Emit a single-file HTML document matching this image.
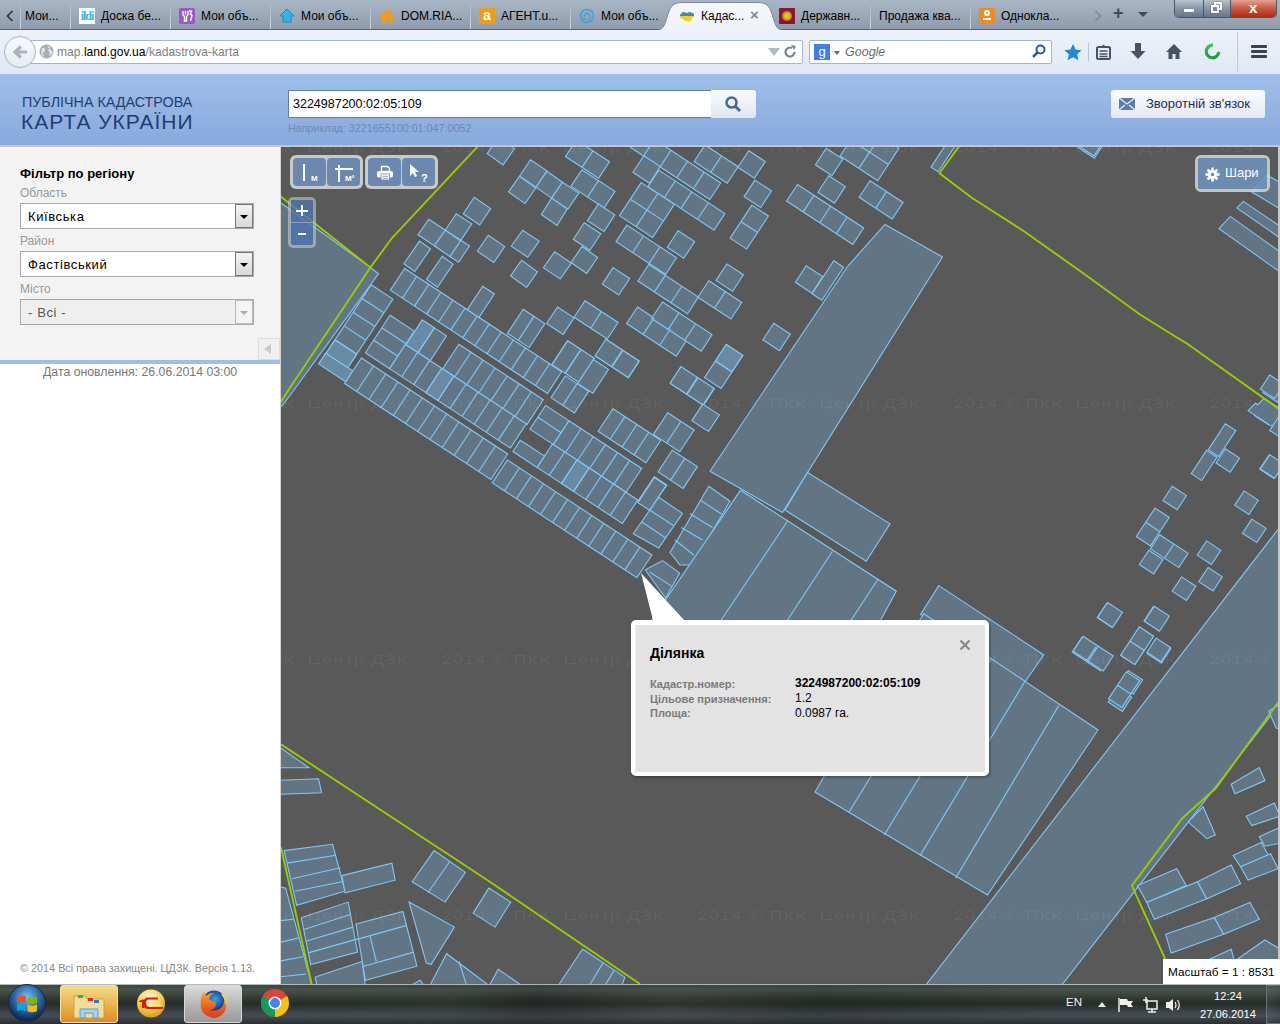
<!DOCTYPE html>
<html><head><meta charset="utf-8">
<style>
*{margin:0;padding:0;box-sizing:border-box}
html,body{width:1280px;height:1024px;overflow:hidden;font-family:"Liberation Sans",sans-serif;background:#fff;position:relative}
.a{position:absolute}
#tabbar{left:0;top:0;width:1280px;height:30px;background:linear-gradient(#a9b6c5,#8e9cad);border-bottom:1px solid #566272}
.tab{position:absolute;top:9px;font-size:12px;color:#000;white-space:nowrap;line-height:14px}
.sep{position:absolute;top:5px;width:1px;height:24px;background:linear-gradient(rgba(210,220,232,0.2),rgba(225,232,240,.8))}
.ico{position:absolute;top:8px;width:16px;height:16px}
#nav{left:0;top:30px;width:1280px;height:44px;background:linear-gradient(#edf2f8,#dfe8f4)}
#header{left:0;top:74px;width:1280px;height:71px;background:linear-gradient(#a0beea,#88a9dd)}
#left{left:0;top:147px;width:280px;height:837px;background:#fff}
#map{left:281px;top:147px;width:999px;height:837px;background:#595959;overflow:hidden}
#taskbar{left:0;top:984px;width:1280px;height:40px;background:linear-gradient(#3a423e 0%,#48524a 15%,#323a34 35%,#262c28 50%,#3e444a 70%,#454b52 80%,#2a2e32 100%)}
.lbl{position:absolute;left:20px;font-size:12px;color:#999}
.sel{position:absolute;left:20px;width:234px;height:26px;background:#fff;border:1px solid #a9a9a9;font-size:13px;letter-spacing:0.6px;color:#000;padding:6px 0 0 7px;line-height:14px}
.sel i{position:absolute;right:0;top:0;width:18px;height:24px;border:1px solid #777;background:linear-gradient(#f4f4f4,#d8d8d8)}
.sel i:after{content:"";position:absolute;left:4px;top:10px;border-left:4px solid transparent;border-right:4px solid transparent;border-top:4px solid #000}
.grp{position:absolute;top:155px;height:34px;border-radius:6px;background:#c9c9c9}
.btn{position:absolute;top:3px;width:33px;height:30px;border-radius:4px;background:#6b88b0}
.wm{position:absolute;font-size:15px;color:rgba(120,120,120,0.35);white-space:nowrap;letter-spacing:0.5px}
.sel i.dis:after{border-top-color:#aaa}
</style></head><body>
<div id="tabbar" class="a">
  <svg class="a" style="left:6px;top:10px" width="8" height="12" viewBox="0 0 8 12"><path d="M6.5 1L1.5 6l5 5" fill="none" stroke="#2a2f36" stroke-width="1.6"/></svg>
  <div class="sep" style="left:20px"></div>
  <div class="tab" style="left:25px">Мои...</div>
  <div class="sep" style="left:70px"></div>
  <div class="ico" style="left:79px;background:#fff;color:#33b5e5;font:bold 12px 'Liberation Serif',serif;line-height:16px;text-align:center;letter-spacing:-1px">ildi</div>
  <div class="tab" style="left:101px">Доска бе...</div>
  <div class="sep" style="left:170px"></div>
  <svg class="ico" style="left:179px" viewBox="0 0 16 16"><rect width="16" height="16" rx="2" fill="#9b59c6"/><path d="M4 3v4l1.5 1.5V13h2V8.5L9 7V3M6.5 3v3.5M10 3h2.5l-1 3 1.5 1.5-1.5 5.5" fill="none" stroke="#fff" stroke-width="1.4"/></svg>
  <div class="tab" style="left:201px">Мои объ...</div>
  <div class="sep" style="left:270px"></div>
  <svg class="ico" style="left:279px" viewBox="0 0 16 16"><path d="M8 1L1 8h3v6h8V8h3z" fill="#3ab0e8" stroke="#1a88c8" stroke-width="1"/></svg>
  <div class="tab" style="left:301px">Мои объ...</div>
  <div class="sep" style="left:370px"></div>
  <svg class="ico" style="left:379px" viewBox="0 0 16 16"><path d="M8 1L0 9h2.5v6h4v-4h3v4h4V9H16z" fill="#f39a1e"/></svg>
  <div class="tab" style="left:401px">DOM.RIA...</div>
  <div class="sep" style="left:470px"></div>
  <div class="ico" style="left:479px;background:#f39c12;color:#fff;font:bold 14px 'Liberation Sans',sans-serif;line-height:14px;text-align:center">a</div>
  <div class="tab" style="left:501px">АГЕНТ.u...</div>
  <div class="sep" style="left:570px"></div>
  <svg class="ico" style="left:579px" viewBox="0 0 16 16"><circle cx="8" cy="8" r="6.5" fill="none" stroke="#3aa4e0" stroke-width="1.6"/><path d="M8 4.5L5 8v3.5h6V8z" fill="none" stroke="#3aa4e0" stroke-width="1.2"/></svg>
  <div class="tab" style="left:601px">Мои объ...</div>
  <svg class="a" style="left:650px;top:0" width="140" height="31" viewBox="0 0 140 31"><defs><linearGradient id="atab" x1="0" y1="0" x2="0" y2="1"><stop offset="0" stop-color="#f6f8fb"/><stop offset="1" stop-color="#edf2f8"/></linearGradient></defs><path d="M5 30.5C14 30.5 15 24 18 14 21 5 24 2.5 33 2.5H107C116 2.5 119 5 122 14 125 24 126 30.5 135 30.5z" fill="url(#atab)" stroke="#7d8898" stroke-width="1"/><rect x="0" y="30" width="140" height="1" fill="#edf2f8"/></svg>
  <svg class="ico" style="left:679px;top:9px" viewBox="0 0 16 16"><path d="M1 6l3-3 4 1 3-1 4 2 0 3-2 1-1 3-2 1-1 -1-3 0-2-2-3-1z" fill="#f5d21a"/><path d="M1 6l3-3 4 1 3-1 4 2 0 2H1z" fill="#3a86d0"/></svg>
  <div class="tab" style="left:701px">Кадас...</div>
  <div class="a" style="left:750px;top:7px;font:bold 15px 'Liberation Sans',sans-serif;color:#888;line-height:16px">&#215;</div>
  <div class="ico" style="left:779px;background:#8a1538;border-radius:1px"><div style="position:absolute;left:3px;top:3px;width:10px;height:10px;border-radius:50%;background:#e8c020;border:2px solid #c89010"></div></div>
  <div class="tab" style="left:801px">Державн...</div>
  <div class="sep" style="left:870px"></div>
  <div class="tab" style="left:879px">Продажа ква...</div>
  <div class="sep" style="left:970px"></div>
  <div class="ico" style="left:979px;background:#f28a1c;border-radius:2px"><div style="position:absolute;left:5px;top:2px;width:6px;height:6px;border-radius:50%;border:2px solid #fff"></div><div style="position:absolute;left:4px;top:10px;width:8px;height:4px;border-top:2px solid #fff"></div></div>
  <div class="tab" style="left:1001px">Однокла...</div>
  <svg class="a" style="left:1094px;top:10px" width="8" height="12" viewBox="0 0 8 12"><path d="M1.5 1l5 5-5 5" fill="none" stroke="#7d8794" stroke-width="1.6"/></svg>
  <div class="a" style="left:1113px;top:4px;font:bold 18px 'Liberation Sans',sans-serif;color:#444b55;line-height:18px">+</div>
  <div class="a" style="left:1138px;top:12px;border-left:5px solid transparent;border-right:5px solid transparent;border-top:5px solid #444b55"></div>
  <div class="a" style="left:1174px;top:0;width:103px;height:18px;border:1px solid #4a5664;border-top:none;border-radius:0 0 5px 5px;overflow:hidden">
    <div class="a" style="left:0;top:0;width:28px;height:17px;background:linear-gradient(#b7c2ce,#8896a8 50%,#657486)"></div>
    <div class="a" style="left:9px;top:9px;width:10px;height:3px;background:#fff;box-shadow:0 0 1px #333"></div>
    <div class="a" style="left:28px;top:0;width:1px;height:17px;background:#4a5664"></div>
    <div class="a" style="left:29px;top:0;width:26px;height:17px;background:linear-gradient(#b7c2ce,#8896a8 50%,#657486)"></div>
    <div class="a" style="left:39px;top:2px;width:8px;height:8px;border:2px solid #fff;box-shadow:0 0 1px #333"></div><div class="a" style="left:36px;top:5px;width:8px;height:8px;border:2px solid #fff;background:#7a889a;box-shadow:0 0 1px #333"></div>
    <div class="a" style="left:55px;top:0;width:1px;height:17px;background:#4a5664"></div>
    <div class="a" style="left:56px;top:0;width:47px;height:17px;background:linear-gradient(#e3a190,#c75a3f 50%,#b52a10)"></div>
    <div class="a" style="left:74px;top:-1px;font:bold 15px 'Liberation Sans',sans-serif;color:#fff;line-height:17px">x</div>
  </div>
</div>
<div id="nav" class="a">
  <div class="a" style="left:23px;top:10px;width:780px;height:24px;background:#fff;border:1px solid #a9b6c6;border-radius:2px"></div>
  <div class="a" style="left:4px;top:6px;width:32px;height:32px;border-radius:50%;background:linear-gradient(#f8fafc,#e6ecf3);border:1px solid #a6b2c0"></div>
  <svg class="a" style="left:12px;top:14px" width="16" height="16" viewBox="0 0 16 16"><path d="M15 8H5M9 2.5L3 8l6 5.5" fill="none" stroke="#a9b3be" stroke-width="3.2"/></svg>
  <svg class="a" style="left:39px;top:14px" width="15" height="15" viewBox="0 0 15 15"><circle cx="7.5" cy="7.5" r="7" fill="#a9adb2"/><path d="M3 4q2-1 3 1t-1 3 0 3l-1 2q-3-3-1-9zM8 2q3 0 4 2l-2 1-1 2 2 2-1 3q3-1 4-4" fill="#dfe2e5"/></svg>
  <div class="a" style="left:57px;top:15px;font-size:12.1px;color:#808080;line-height:14px;white-space:nowrap">map.<span style="color:#000">land.gov.ua</span>/kadastrova-karta</div>
  <div class="a" style="left:768px;top:18px;border-left:6px solid transparent;border-right:6px solid transparent;border-top:8px solid #b0b8c2"></div>
  <svg class="a" style="left:783px;top:15px" width="14" height="14" viewBox="0 0 14 14"><path d="M11.5 7A4.5 4.5 0 1 1 9 3" fill="none" stroke="#7a8694" stroke-width="2.2"/><path d="M8 0l5 1-2 4z" fill="#7a8694"/></svg>
  <div class="a" style="left:809px;top:10px;width:243px;height:24px;background:#fff;border:1px solid #a9b6c6;border-radius:2px"></div>
  <div class="a" style="left:814px;top:14px;width:16px;height:16px;background:#3f7fe6;color:#fff;font-size:13px;line-height:16px;text-align:center">g</div>
  <div class="a" style="left:834px;top:21px;border-left:3px solid transparent;border-right:3px solid transparent;border-top:4px solid #666"></div>
  <div class="a" style="left:845px;top:15px;font-size:12.5px;font-style:italic;color:#6d6d6d;line-height:14px">Google</div>
  <svg class="a" style="left:1032px;top:14px" width="14" height="14" viewBox="0 0 14 14"><circle cx="8.5" cy="5.5" r="4" fill="none" stroke="#2a5a9a" stroke-width="2"/><path d="M6 8l-5 5" stroke="#2a5a9a" stroke-width="2.5"/></svg>
  <svg class="a" style="left:1064px;top:14px" width="18" height="17" viewBox="0 0 18 17"><path d="M9 0l2.6 5.5 6 .7-4.5 4 1.3 6L9 13.2 3.6 16.2l1.3-6-4.5-4 6-.7z" fill="#1f8ad8"/></svg>
  <div class="a" style="left:1088px;top:13px;width:1px;height:18px;background:#b8c4d2"></div>
  <svg class="a" style="left:1096px;top:14px" width="15" height="16" viewBox="0 0 15 16"><rect x="1" y="3" width="13" height="12" rx="1.5" fill="none" stroke="#4a5260" stroke-width="2"/><path d="M5 3l2.5-2.5L10 3" fill="#4a5260"/><path d="M3.5 7h8M3.5 10h8M3.5 12.5h8" stroke="#4a5260" stroke-width="1.5"/></svg>
  <svg class="a" style="left:1130px;top:13px" width="16" height="18" viewBox="0 0 16 18"><path d="M5 0h6v8h4.5L8 16 .5 8H5z" fill="#4a5260"/></svg>
  <svg class="a" style="left:1166px;top:14px" width="16" height="16" viewBox="0 0 16 16"><path d="M8 0L0 8h2.5v7h4v-5h3v5h4V8H16z" fill="#4a5260"/></svg>
  <svg class="a" style="left:1204px;top:13px" width="17" height="17" viewBox="0 0 17 17"><defs><linearGradient id="gr" x1="0" y1="0" x2="0" y2="1"><stop offset="0" stop-color="#3cc060"/><stop offset="1" stop-color="#1f9a3e"/></linearGradient></defs><path d="M9 2.2A6.3 6.3 0 1 0 14.8 9" fill="none" stroke="url(#gr)" stroke-width="3.2"/></svg>
  <div class="a" style="left:1237px;top:2px;width:1px;height:40px;background:#c0cad6"></div>
  <div class="a" style="left:1251px;top:15px;width:16px;height:3px;background:#3a414c;border-radius:1px;box-shadow:0 5px 0 #3a414c,0 10px 0 #3a414c"></div>
</div>
<div id="header" class="a">
  <div class="a" style="left:22px;top:20px;font-size:14.3px;color:#1f3f6f;line-height:16px;white-space:nowrap">ПУБЛІЧНА КАДАСТРОВА</div>
  <div class="a" style="left:21px;top:37px;font-size:21px;letter-spacing:1px;color:#1f3f6f;line-height:22px;white-space:nowrap">КАРТА УКРАЇНИ</div>
  <div class="a" style="left:288px;top:16px;width:424px;height:28px;background:#fff;border:1px solid #5f7fae"></div>
  <div class="a" style="left:293px;top:23px;font-size:12.5px;color:#000;line-height:14px">3224987200:02:05:109</div>
  <div class="a" style="left:711px;top:16px;width:45px;height:28px;background:linear-gradient(#fafbfd,#dfe6f0);border-radius:0 3px 3px 0"></div>
  <svg class="a" style="left:724px;top:21px" width="18" height="18" viewBox="0 0 18 18"><circle cx="7.5" cy="7.5" r="5" fill="none" stroke="#4a6a98" stroke-width="2.6"/><path d="M11 11l5 5" stroke="#4a6a98" stroke-width="3"/></svg>
  <div class="a" style="left:288px;top:48px;font-size:10.75px;color:#6d88b4;line-height:12px;white-space:nowrap">Наприклад: 3221655100:01:047:0052</div>
  <div class="a" style="left:1111px;top:16px;width:154px;height:28px;background:linear-gradient(#fbfcfe,#e3e9f3);border-radius:3px"></div>
  <svg class="a" style="left:1119px;top:24px" width="16" height="12" viewBox="0 0 16 12"><rect x="0" y="0" width="16" height="12" fill="#5c7aaa"/><path d="M0 0l8 6 8-6M0 12l6-5M16 12l-6-5" fill="none" stroke="#e8eef6" stroke-width="1.3"/></svg>
  <div class="a" style="left:1146px;top:23px;font-size:13px;color:#1d2c55;line-height:14px;white-space:nowrap">Зворотній зв'язок</div>
</div>
<div class="a" style="left:0;top:145px;width:1280px;height:2px;background:#c6c6c6"></div>
<div id="left" class="a">
  <div class="a" style="left:0;top:0;width:280px;height:213px;background:#f3f3f3"></div>
  <div class="a" style="left:20px;top:19px;font-size:13px;font-weight:bold;color:#000;line-height:15px">Фільтр по регіону</div>
  <div class="lbl" style="top:40px;line-height:13px">Область</div>
  <div class="sel" style="top:56px">Київська<i></i></div>
  <div class="lbl" style="top:88px;line-height:13px">Район</div>
  <div class="sel" style="top:104px">Фастівський<i></i></div>
  <div class="lbl" style="top:136px;line-height:13px">Місто</div>
  <div class="sel" style="top:152px;background:#efefef;color:#555">- Всі -<i style="background:#f4f4f4;border-color:#bbb" class="dis"></i></div>
  <div class="a" style="left:258px;top:191px;width:22px;height:22px;border:1px solid #ddd;background:#f0f0f0"></div>
  <div class="a" style="left:264px;top:197px;border-top:5px solid transparent;border-bottom:5px solid transparent;border-right:7px solid #c8c8c8"></div>
  <div class="a" style="left:0;top:213px;width:280px;height:4px;background:#9fbde8"></div>
  <div class="a" style="left:43px;top:219px;font-size:12.3px;color:#777;line-height:13px;white-space:nowrap">Дата оновлення: 26.06.2014 03:00</div>
  <div class="a" style="left:20px;top:815px;font-size:10.85px;color:#888;line-height:12px;white-space:nowrap">© 2014 Всі права захищені. ЦДЗК. Версія 1.13.</div>
  <div class="a" style="left:280px;top:0;width:1px;height:837px;background:#d4d4d4"></div>
</div>
<div id="map" class="a"><!--MAP--><svg width="999" height="837" viewBox="281 147 999 837" style="position:absolute;left:0;top:0">
<polygon points="487.2,153.6 503.1,165.0 514.4,148.6 498.4,137.2" fill="#627585" stroke="#80c8f6" stroke-width="1.1"/>
<polygon points="519.5,176.2 530.5,159.8 546.9,170.8 535.9,187.2" fill="#627585" stroke="#80c8f6" stroke-width="1.1"/>
<polygon points="508.6,191.9 519.5,176.2 535.9,188.0 525.0,203.6" fill="#627585" stroke="#80c8f6" stroke-width="1.1"/>
<polygon points="535.9,187.2 546.9,171.2 562.5,182.2 551.6,198.1" fill="#627585" stroke="#80c8f6" stroke-width="1.1"/>
<polygon points="551.6,198.1 562.5,182.2 578.9,193.1 568.0,209.1" fill="#627585" stroke="#80c8f6" stroke-width="1.1"/>
<polygon points="541.4,214.5 551.6,198.1 567.2,209.1 557.0,225.5" fill="#627585" stroke="#80c8f6" stroke-width="1.1"/>
<polygon points="463.3,213.8 474.2,197.3 490.6,208.6 479.7,225.0" fill="#627585" stroke="#80c8f6" stroke-width="1.1"/>
<polygon points="418.0,234.8 428.9,219.2 445.3,230.2 434.4,245.8" fill="#627585" stroke="#80c8f6" stroke-width="1.1"/>
<polygon points="445.3,230.2 456.2,213.8 471.9,223.9 460.9,240.3" fill="#627585" stroke="#80c8f6" stroke-width="1.1"/>
<polygon points="434.4,245.8 445.3,230.2 460.9,241.1 450.0,256.7" fill="#627585" stroke="#80c8f6" stroke-width="1.1"/>
<polygon points="450.0,256.7 460.9,240.3 469.5,245.8 458.6,262.2" fill="#627585" stroke="#80c8f6" stroke-width="1.1"/>
<polygon points="403.9,263.8 419.5,241.1 430.5,248.9 414.8,271.6" fill="#627585" stroke="#80c8f6" stroke-width="1.1"/>
<polygon points="426.6,279.4 442.2,256.2 453.1,264.1 437.5,287.2" fill="#627585" stroke="#80c8f6" stroke-width="1.1"/>
<polygon points="477.3,251.2 488.3,235.3 504.7,246.6 493.8,262.5" fill="#627585" stroke="#80c8f6" stroke-width="1.1"/>
<polygon points="511.2,246.2 522.7,230.2 539.2,241.1 527.8,257.2" fill="#627585" stroke="#80c8f6" stroke-width="1.1"/>
<polygon points="510.6,275.9 521.6,260.3 537.5,271.9 526.6,287.5" fill="#627585" stroke="#80c8f6" stroke-width="1.1"/>
<polygon points="543.4,267.7 554.7,251.7 571.4,263.1 560.2,279.1" fill="#627585" stroke="#80c8f6" stroke-width="1.1"/>
<polygon points="571.1,262.5 582.0,246.6 597.7,257.5 586.7,273.4" fill="#627585" stroke="#80c8f6" stroke-width="1.1"/>
<polygon points="281.0,203.0 370.4,267.5 378.5,273.8 292.5,392.0 282.0,406.0 270.0,406.0 270.0,203.0" fill="#627585" stroke="#80c8f6" stroke-width="1.1"/>
<polygon points="371.2,284.8 392.9,299.1 347.9,367.6 326.1,353.4" fill="#627585" stroke="#80c8f6" stroke-width="1.1"/>
<polygon points="325.7,353.1 352.9,370.9 345.7,381.8 318.6,363.9" fill="#6a8aa3" stroke="#80c8f6" stroke-width="1.1"/>
<polygon points="334.9,340.0 356.6,354.3 347.9,367.6 326.1,353.4" fill="#6a8aa3" stroke="#80c8f6" stroke-width="1.1"/>
<polygon points="404.6,268.5 561.7,371.7 547.5,393.4 390.3,290.2" fill="#627585" stroke="#80c8f6" stroke-width="1.1"/>
<polygon points="482.7,286.3 494.4,294.0 479.0,317.4 467.3,309.7" fill="#627585" stroke="#80c8f6" stroke-width="1.1"/>
<polygon points="523.2,309.3 544.9,323.6 529.1,347.6 507.4,333.3" fill="#627585" stroke="#80c8f6" stroke-width="1.1"/>
<polygon points="390.1,315.2 414.3,331.1 389.6,368.7 365.4,352.8" fill="#627585" stroke="#80c8f6" stroke-width="1.1"/>
<polygon points="422.3,319.9 446.5,335.9 430.2,360.7 406.0,344.8" fill="#627585" stroke="#80c8f6" stroke-width="1.1"/>
<polygon points="422.3,319.9 434.4,327.9 418.1,352.7 406.0,344.8" fill="#6a8aa3" stroke="#80c8f6" stroke-width="1.1"/>
<polygon points="458.9,344.3 543.3,399.7 527.1,424.4 442.7,368.9" fill="#627585" stroke="#80c8f6" stroke-width="1.1"/>
<polygon points="405.5,344.5 526.3,423.8 510.4,448.1 389.6,368.7" fill="#627585" stroke="#80c8f6" stroke-width="1.1"/>
<polygon points="441.8,368.3 453.8,376.2 437.9,400.5 425.8,392.5" fill="#6a8aa3" stroke="#80c8f6" stroke-width="1.1"/>
<polygon points="361.4,358.0 507.7,454.0 490.9,479.5 344.6,383.5" fill="#627585" stroke="#80c8f6" stroke-width="1.1"/>
<polygon points="507.3,460.0 651.9,555.0 636.9,577.8 492.3,482.9" fill="#627585" stroke="#80c8f6" stroke-width="1.1"/>
<polygon points="545.6,405.4 569.0,420.8 553.4,444.6 529.9,429.2" fill="#627585" stroke="#80c8f6" stroke-width="1.1"/>
<polygon points="569.0,420.8 641.7,468.5 626.1,492.3 553.4,444.6" fill="#627585" stroke="#80c8f6" stroke-width="1.1"/>
<polygon points="552.5,444.0 637.8,500.0 622.4,523.4 537.1,467.4" fill="#627585" stroke="#80c8f6" stroke-width="1.1"/>
<polygon points="576.9,460.0 589.1,468.0 573.7,491.4 561.5,483.4" fill="#6a8aa3" stroke="#80c8f6" stroke-width="1.1"/>
<polygon points="520.3,440.2 544.6,456.1 537.1,467.4 512.9,451.5" fill="#627585" stroke="#80c8f6" stroke-width="1.1"/>
<polygon points="638.1,128.8 654.7,139.6 643.8,156.2 627.3,145.3" fill="#627585" stroke="#80c8f6" stroke-width="1.1"/>
<polygon points="654.5,139.5 720.7,183.0 709.8,199.5 643.6,156.0" fill="#627585" stroke="#80c8f6" stroke-width="1.1"/>
<polygon points="643.8,155.8 660.3,166.6 649.4,183.2 632.9,172.3" fill="#627585" stroke="#80c8f6" stroke-width="1.1"/>
<polygon points="658.8,170.1 724.9,213.6 714.1,230.2 647.9,186.7" fill="#627585" stroke="#80c8f6" stroke-width="1.1"/>
<polygon points="641.2,182.6 674.3,204.4 652.6,237.5 619.5,215.7" fill="#627585" stroke="#80c8f6" stroke-width="1.1"/>
<polygon points="626.9,225.1 676.5,257.7 665.7,274.3 616.0,241.7" fill="#627585" stroke="#80c8f6" stroke-width="1.1"/>
<polygon points="678.1,230.8 694.7,241.6 683.8,258.2 667.3,247.3" fill="#627585" stroke="#80c8f6" stroke-width="1.1"/>
<polygon points="748.8,150.8 765.3,161.6 754.4,178.2 737.9,167.3" fill="#627585" stroke="#80c8f6" stroke-width="1.1"/>
<polygon points="705.0,145.0 738.1,166.7 727.2,183.3 694.1,161.5" fill="#627585" stroke="#80c8f6" stroke-width="1.1"/>
<polygon points="755.0,180.1 771.5,191.0 760.7,207.5 744.1,196.7" fill="#627585" stroke="#80c8f6" stroke-width="1.1"/>
<polygon points="751.9,205.1 768.4,216.0 746.7,249.1 730.1,238.2" fill="#627585" stroke="#80c8f6" stroke-width="1.1"/>
<polygon points="726.9,263.9 743.4,274.7 732.6,291.3 716.0,280.4" fill="#627585" stroke="#80c8f6" stroke-width="1.1"/>
<polygon points="613.1,267.6 629.7,278.5 618.8,295.0 602.3,284.2" fill="#627585" stroke="#80c8f6" stroke-width="1.1"/>
<polygon points="581.9,169.7 615.0,191.4 604.1,208.0 571.0,186.2" fill="#627585" stroke="#80c8f6" stroke-width="1.1"/>
<polygon points="576.4,140.0 609.5,161.7 598.6,178.3 565.5,156.5" fill="#627585" stroke="#80c8f6" stroke-width="1.1"/>
<polygon points="598.3,204.0 614.8,214.9 604.0,231.5 587.4,220.6" fill="#627585" stroke="#80c8f6" stroke-width="1.1"/>
<polygon points="584.2,222.8 600.8,233.7 589.9,250.2 573.3,239.3" fill="#627585" stroke="#80c8f6" stroke-width="1.1"/>
<polygon points="648.8,264.5 698.4,297.1 687.5,313.7 637.9,281.0" fill="#627585" stroke="#80c8f6" stroke-width="1.1"/>
<polygon points="708.8,280.8 741.8,302.5 731.0,319.0 697.9,297.3" fill="#627585" stroke="#80c8f6" stroke-width="1.1"/>
<polygon points="826.2,148.2 842.8,159.1 831.9,175.7 815.4,164.8" fill="#627585" stroke="#80c8f6" stroke-width="1.1"/>
<polygon points="828.8,175.8 845.3,186.6 834.4,203.2 817.9,192.3" fill="#627585" stroke="#80c8f6" stroke-width="1.1"/>
<polygon points="797.5,184.5 863.7,228.0 852.8,244.5 786.6,201.0" fill="#627585" stroke="#80c8f6" stroke-width="1.1"/>
<polygon points="806.2,265.8 822.8,276.6 811.9,293.2 795.4,282.3" fill="#627585" stroke="#80c8f6" stroke-width="1.1"/>
<polygon points="833.7,260.8 843.6,267.2 821.9,300.2 812.1,293.8" fill="#627585" stroke="#80c8f6" stroke-width="1.1"/>
<polygon points="773.8,323.2 790.3,334.1 779.4,350.7 762.9,339.8" fill="#627585" stroke="#80c8f6" stroke-width="1.1"/>
<polygon points="726.2,344.5 742.8,355.4 721.1,388.5 704.5,377.6" fill="#627585" stroke="#80c8f6" stroke-width="1.1"/>
<polygon points="726.2,344.5 742.8,355.4 731.9,371.9 715.4,361.0" fill="#6a8aa3" stroke="#80c8f6" stroke-width="1.1"/>
<polygon points="681.2,367.0 714.3,388.7 703.5,405.3 670.4,383.5" fill="#627585" stroke="#80c8f6" stroke-width="1.1"/>
<polygon points="637.5,307.0 687.1,339.6 676.3,356.2 626.6,323.5" fill="#627585" stroke="#80c8f6" stroke-width="1.1"/>
<polygon points="662.5,302.0 712.1,334.6 701.3,351.2 651.6,318.5" fill="#627585" stroke="#80c8f6" stroke-width="1.1"/>
<polygon points="557.5,307.0 574.0,317.9 563.2,334.4 546.6,323.5" fill="#627585" stroke="#80c8f6" stroke-width="1.1"/>
<polygon points="585.0,300.8 618.1,322.5 607.2,339.0 574.1,317.3" fill="#627585" stroke="#80c8f6" stroke-width="1.1"/>
<polygon points="606.2,339.5 639.3,361.2 628.5,377.8 595.4,356.0" fill="#627585" stroke="#80c8f6" stroke-width="1.1"/>
<polygon points="567.5,340.8 594.2,358.3 578.9,381.7 552.1,364.2" fill="#627585" stroke="#80c8f6" stroke-width="1.1"/>
<polygon points="861.4,123.6 899.0,148.3 877.7,180.7 840.1,156.0" fill="#627585" stroke="#80c8f6" stroke-width="1.1"/>
<polygon points="870.0,180.8 903.1,202.5 892.2,219.0 859.1,197.3" fill="#627585" stroke="#80c8f6" stroke-width="1.1"/>
<polygon points="947.5,142.0 954.6,146.7 938.1,171.7 931.0,167.1" fill="#627585" stroke="#80c8f6" stroke-width="1.1"/>
<polygon points="1088.8,130.7 1105.3,141.6 1094.4,158.2 1077.9,147.3" fill="#627585" stroke="#80c8f6" stroke-width="1.1"/>
<polygon points="885.0,224.5 942.5,257.0 782.5,512.5 710.0,471.2 848.1,265.8" fill="#627585" stroke="#80c8f6" stroke-width="1.1"/>
<polygon points="785.0,510.0 807.5,472.5 890.0,523.8 866.2,561.2" fill="#627585" stroke="#80c8f6" stroke-width="1.1"/>
<polygon points="740.0,491.2 896.2,591.2 870.0,637.5 645.0,637.5 665.0,602.5" fill="#627585" stroke="#80c8f6" stroke-width="1.1"/>
<polygon points="708.8,486.2 730.0,501.2 692.5,565.0 680.0,565.0 670.0,552.5" fill="#627585" stroke="#80c8f6" stroke-width="1.1"/>
<polygon points="1225.3,423.8 1235.8,430.6 1218.7,456.5 1208.3,449.7" fill="#627585" stroke="#80c8f6" stroke-width="1.1"/>
<polygon points="1206.6,450.3 1217.0,457.2 1201.6,480.6 1191.2,473.7" fill="#627585" stroke="#80c8f6" stroke-width="1.1"/>
<polygon points="1225.3,448.8 1239.5,458.1 1230.2,472.3 1216.0,463.0" fill="#627585" stroke="#80c8f6" stroke-width="1.1"/>
<polygon points="1172.2,486.2 1186.4,495.6 1177.1,509.8 1162.9,500.5" fill="#627585" stroke="#80c8f6" stroke-width="1.1"/>
<polygon points="1155.0,508.1 1169.2,517.5 1150.5,545.9 1136.3,536.5" fill="#627585" stroke="#80c8f6" stroke-width="1.1"/>
<polygon points="1159.7,534.7 1188.1,553.4 1178.8,567.6 1150.4,548.9" fill="#627585" stroke="#80c8f6" stroke-width="1.1"/>
<polygon points="1148.8,550.3 1163.0,559.6 1153.6,573.9 1139.4,564.5" fill="#627585" stroke="#80c8f6" stroke-width="1.1"/>
<polygon points="1206.6,540.9 1220.8,550.3 1211.4,564.5 1197.2,555.1" fill="#627585" stroke="#80c8f6" stroke-width="1.1"/>
<polygon points="1208.1,567.5 1222.3,576.8 1213.0,591.0 1198.8,581.7" fill="#627585" stroke="#80c8f6" stroke-width="1.1"/>
<polygon points="1181.6,576.9 1195.8,586.2 1186.4,600.4 1172.2,591.1" fill="#627585" stroke="#80c8f6" stroke-width="1.1"/>
<polygon points="1244.1,490.9 1258.3,500.3 1248.9,514.5 1234.7,505.1" fill="#627585" stroke="#80c8f6" stroke-width="1.1"/>
<polygon points="1251.9,519.1 1266.1,528.4 1256.8,542.6 1242.5,533.3" fill="#627585" stroke="#80c8f6" stroke-width="1.1"/>
<polygon points="1269.1,455.0 1283.3,464.3 1273.9,478.5 1259.7,469.2" fill="#627585" stroke="#80c8f6" stroke-width="1.1"/>
<polygon points="1263.7,401.2 1278.0,410.6 1268.6,424.8 1254.4,415.5" fill="#627585" stroke="#80c8f6" stroke-width="1.1"/>
<polygon points="1272.2,378.4 1286.4,387.8 1277.1,402.0 1262.9,392.6" fill="#627585" stroke="#80c8f6" stroke-width="1.1"/>
<polygon points="1106.6,603.4 1120.8,612.8 1111.4,627.0 1097.2,617.6" fill="#627585" stroke="#80c8f6" stroke-width="1.1"/>
<polygon points="1153.4,606.6 1167.6,615.9 1158.3,630.1 1144.1,620.8" fill="#627585" stroke="#80c8f6" stroke-width="1.1"/>
<polygon points="1081.6,637.8 1110.0,656.5 1100.6,670.7 1072.2,652.0" fill="#627585" stroke="#80c8f6" stroke-width="1.1"/>
<polygon points="1139.4,626.9 1153.6,636.2 1134.9,664.6 1120.7,655.3" fill="#627585" stroke="#80c8f6" stroke-width="1.1"/>
<polygon points="1156.6,639.4 1170.8,648.7 1161.4,662.9 1147.2,653.6" fill="#627585" stroke="#80c8f6" stroke-width="1.1"/>
<polygon points="1128.4,670.6 1142.6,680.0 1133.3,694.2 1119.1,684.8" fill="#627585" stroke="#80c8f6" stroke-width="1.1"/>
<polygon points="1117.5,687.8 1131.7,697.1 1122.4,711.4 1108.2,702.0" fill="#627585" stroke="#80c8f6" stroke-width="1.1"/>
<polygon points="1280.0,526.9 1280.0,703.8 1058.0,990.0 922.0,990.0" fill="#627585" stroke="#80c8f6" stroke-width="1.1"/>
<polygon points="740.6,490.3 896.2,591.2 870.0,640.0 638.0,640.0" fill="#627585" stroke="#80c8f6" stroke-width="1.1"/>
<polygon points="938.8,585.6 1043.8,655.0 1025.3,681.6 920.6,614.4" fill="#627585" stroke="#80c8f6" stroke-width="1.1"/>
<polygon points="923.8,613.8 1098.0,730.0 987.5,895.0 815.0,792.0 880.0,680.0" fill="#627585" stroke="#80c8f6" stroke-width="1.1"/>
<polygon points="1107.5,602.5 1122.5,612.4 1112.6,627.4 1097.6,617.5" fill="#627585" stroke="#80c8f6" stroke-width="1.1"/>
<polygon points="1154.3,606.2 1169.4,616.1 1159.5,631.2 1144.4,621.3" fill="#627585" stroke="#80c8f6" stroke-width="1.1"/>
<polygon points="1083.1,636.2 1113.2,656.0 1103.3,671.1 1073.2,651.3" fill="#627585" stroke="#80c8f6" stroke-width="1.1"/>
<polygon points="1139.3,626.9 1153.5,636.2 1134.9,664.6 1120.7,655.3" fill="#627585" stroke="#80c8f6" stroke-width="1.1"/>
<polygon points="1156.2,638.1 1170.4,647.5 1161.1,661.7 1146.9,652.3" fill="#627585" stroke="#80c8f6" stroke-width="1.1"/>
<polygon points="1126.2,671.9 1139.6,680.6 1122.0,707.4 1108.6,698.6" fill="#627585" stroke="#80c8f6" stroke-width="1.1"/>
<polygon points="1231.2,784.3 1259.3,767.5 1264.9,780.6 1234.9,793.7" fill="#627585" stroke="#80c8f6" stroke-width="1.1"/>
<polygon points="1246.2,816.2 1274.3,803.1 1279.9,816.2 1251.8,825.6" fill="#627585" stroke="#80c8f6" stroke-width="1.1"/>
<polygon points="1188.1,821.8 1203.1,806.8 1215.4,835.0 1206.8,838.7" fill="#627585" stroke="#80c8f6" stroke-width="1.1"/>
<polygon points="1259.3,836.8 1283.7,825.6 1283.7,842.5 1264.9,846.2" fill="#627585" stroke="#80c8f6" stroke-width="1.1"/>
<polygon points="1233.1,855.6 1261.2,842.5 1268.7,855.6 1240.6,866.8" fill="#627585" stroke="#80c8f6" stroke-width="1.1"/>
<polygon points="1240.6,866.8 1270.6,853.7 1278.1,868.7 1248.1,880.0" fill="#627585" stroke="#80c8f6" stroke-width="1.1"/>
<polygon points="1137.5,885.6 1176.8,868.7 1186.2,885.6 1146.8,902.5" fill="#627585" stroke="#80c8f6" stroke-width="1.1"/>
<polygon points="1146.8,902.5 1197.5,881.8 1206.8,898.7 1154.3,919.3" fill="#627585" stroke="#80c8f6" stroke-width="1.1"/>
<polygon points="1197.5,881.8 1231.2,865.0 1240.6,883.7 1206.8,898.7" fill="#627585" stroke="#80c8f6" stroke-width="1.1"/>
<polygon points="1165.6,934.3 1214.3,917.5 1223.7,934.3 1171.2,953.1" fill="#627585" stroke="#80c8f6" stroke-width="1.1"/>
<polygon points="1214.3,917.5 1249.9,902.5 1259.3,919.3 1223.7,934.3" fill="#627585" stroke="#80c8f6" stroke-width="1.1"/>
<polygon points="1186.2,970.0 1231.2,949.3 1236.8,970.0" fill="#627585" stroke="#80c8f6" stroke-width="1.1"/>
<polygon points="1221.8,970.0 1264.9,940.0 1283.7,951.2 1283.7,970.0" fill="#627585" stroke="#80c8f6" stroke-width="1.1"/>
<polygon points="1268.7,711.2 1283.7,701.9 1283.7,730.0 1276.2,728.1" fill="#627585" stroke="#80c8f6" stroke-width="1.1"/>
<polygon points="654.4,476.6 666.9,485.2 649.3,509.8 638.0,501.2" fill="#627585" stroke="#80c8f6" stroke-width="1.1"/>
<polygon points="658.7,497.3 682.5,513.4 658.7,548.1 633.3,533.7" fill="#627585" stroke="#80c8f6" stroke-width="1.1"/>
<polygon points="662.5,560.6 679.7,573.1 665.6,598.1 645.3,570.0" fill="#627585" stroke="#80c8f6" stroke-width="1.1"/>
<polygon points="1219.0,228.6 1230.3,216.4 1290.0,259.0 1280.0,272.0" fill="#627585" stroke="#80c8f6" stroke-width="1.1"/>
<polygon points="1236.9,207.9 1243.4,201.4 1290.0,233.0 1290.0,245.0" fill="#627585" stroke="#80c8f6" stroke-width="1.1"/>
<polygon points="1251.9,192.0 1266.9,175.1 1290.0,188.0 1290.0,215.0" fill="#627585" stroke="#80c8f6" stroke-width="1.1"/>
<polygon points="1248.1,410.6 1255.6,403.1 1257.5,405.0 1264.0,398.4 1290.0,415.0 1290.0,432.0 1270.6,425.6" fill="#627585" stroke="#80c8f6" stroke-width="1.1"/>
<polygon points="1089.1,132.4 1103.3,141.7 1094.0,155.9 1079.8,146.6" fill="#627585" stroke="#80c8f6" stroke-width="1.1"/>
<polygon points="1269.7,375.0 1283.9,384.3 1274.6,398.5 1260.4,389.2" fill="#627585" stroke="#80c8f6" stroke-width="1.1"/>
<polygon points="1269.7,454.7 1283.9,464.0 1274.6,478.2 1260.4,468.9" fill="#627585" stroke="#80c8f6" stroke-width="1.1"/>
<polygon points="1279.1,416.3 1293.3,425.6 1284.0,439.8 1269.7,430.5" fill="#627585" stroke="#80c8f6" stroke-width="1.1"/>
<polygon points="277.9,745.9 309.1,767.8 277.9,767.8" fill="#627585" stroke="#80c8f6" stroke-width="1.1"/>
<polygon points="277.9,780.3 318.5,778.8 321.6,792.8 277.9,794.4" fill="#627585" stroke="#80c8f6" stroke-width="1.1"/>
<polygon points="284.1,850.6 332.6,844.3 345.1,891.2 296.6,905.2" fill="#627585" stroke="#80c8f6" stroke-width="1.1"/>
<polygon points="341.9,875.6 391.9,863.1 395.1,880.2 345.1,892.8" fill="#627585" stroke="#80c8f6" stroke-width="1.1"/>
<polygon points="277.9,886.5 285.7,888.1 312.2,986.5 277.9,986.5" fill="#627585" stroke="#80c8f6" stroke-width="1.1"/>
<polygon points="301.3,917.8 348.2,902.1 357.6,952.1 310.7,964.6" fill="#627585" stroke="#80c8f6" stroke-width="1.1"/>
<polygon points="356.0,924.0 402.9,911.5 416.9,966.2 365.4,980.2" fill="#627585" stroke="#80c8f6" stroke-width="1.1"/>
<polygon points="315.4,977.1 362.2,961.5 365.4,986.5 316.9,986.5" fill="#627585" stroke="#80c8f6" stroke-width="1.1"/>
<polygon points="409.1,902.1 454.4,927.1 431.0,964.6 426.3,963.1" fill="#627585" stroke="#80c8f6" stroke-width="1.1"/>
<polygon points="412.2,881.8 434.1,850.6 465.4,872.4 445.1,902.1" fill="#627585" stroke="#80c8f6" stroke-width="1.1"/>
<polygon points="473.2,913.1 488.8,888.1 510.7,902.1 495.1,927.1" fill="#627585" stroke="#80c8f6" stroke-width="1.1"/>
<polygon points="429.4,986.5 446.6,953.7 490.4,986.5" fill="#627585" stroke="#80c8f6" stroke-width="1.1"/>
<polygon points="488.8,986.5 498.2,969.3 523.2,986.5" fill="#627585" stroke="#80c8f6" stroke-width="1.1"/>
<polygon points="557.6,986.5 582.6,949.0 624.8,977.1 621.6,986.5" fill="#627585" stroke="#80c8f6" stroke-width="1.1"/>
<polygon points="409.1,986.5 420.1,980.2 424.8,986.5" fill="#627585" stroke="#80c8f6" stroke-width="1.1"/>
<polygon points="567.7,340.8 594.4,358.3 578.7,382.3 552.0,364.7" fill="#627585" stroke="#80c8f6" stroke-width="1.1"/>
<polygon points="593.4,359.5 608.5,369.4 592.8,393.3 577.7,383.4" fill="#627585" stroke="#80c8f6" stroke-width="1.1"/>
<polygon points="565.3,375.9 588.7,391.3 574.4,413.0 551.0,397.7" fill="#627585" stroke="#80c8f6" stroke-width="1.1"/>
<polygon points="605.9,339.2 639.0,361.0 628.2,377.5 595.1,355.8" fill="#627585" stroke="#80c8f6" stroke-width="1.1"/>
<polygon points="680.9,366.6 714.0,388.3 703.2,404.9 670.1,383.1" fill="#627585" stroke="#80c8f6" stroke-width="1.1"/>
<polygon points="702.8,404.1 719.4,414.9 708.5,431.5 691.9,420.6" fill="#627585" stroke="#80c8f6" stroke-width="1.1"/>
<polygon points="613.0,408.7 660.8,440.2 646.0,462.7 598.1,431.3" fill="#627585" stroke="#80c8f6" stroke-width="1.1"/>
<polygon points="667.7,412.7 694.1,430.0 679.8,451.7 653.4,434.4" fill="#627585" stroke="#80c8f6" stroke-width="1.1"/>
<polygon points="672.3,450.2 697.4,466.6 683.1,488.4 658.1,471.9" fill="#627585" stroke="#80c8f6" stroke-width="1.1"/>
<polygon points="654.4,477.5 666.1,485.2 649.6,510.3 637.9,502.6" fill="#627585" stroke="#80c8f6" stroke-width="1.1"/>
<polyline points="362.1,298.5 383.9,312.8" fill="none" stroke="#80c8f6" stroke-width="1.1"/>
<polyline points="353.1,312.2 374.9,326.5" fill="none" stroke="#80c8f6" stroke-width="1.1"/>
<polyline points="344.1,325.9 365.9,340.2" fill="none" stroke="#80c8f6" stroke-width="1.1"/>
<polyline points="335.1,339.6 356.9,353.9" fill="none" stroke="#80c8f6" stroke-width="1.1"/>
<polyline points="416.7,276.4 402.4,298.2" fill="none" stroke="#80c8f6" stroke-width="1.1"/>
<polyline points="428.8,284.4 414.5,306.1" fill="none" stroke="#80c8f6" stroke-width="1.1"/>
<polyline points="440.9,292.3 426.6,314.1" fill="none" stroke="#80c8f6" stroke-width="1.1"/>
<polyline points="452.9,300.3 438.7,322.0" fill="none" stroke="#80c8f6" stroke-width="1.1"/>
<polyline points="465.0,308.2 450.8,329.9" fill="none" stroke="#80c8f6" stroke-width="1.1"/>
<polyline points="477.1,316.1 462.8,337.9" fill="none" stroke="#80c8f6" stroke-width="1.1"/>
<polyline points="489.2,324.1 474.9,345.8" fill="none" stroke="#80c8f6" stroke-width="1.1"/>
<polyline points="501.3,332.0 487.0,353.7" fill="none" stroke="#80c8f6" stroke-width="1.1"/>
<polyline points="513.4,340.0 499.1,361.7" fill="none" stroke="#80c8f6" stroke-width="1.1"/>
<polyline points="525.5,347.9 511.2,369.6" fill="none" stroke="#80c8f6" stroke-width="1.1"/>
<polyline points="537.6,355.8 523.3,377.6" fill="none" stroke="#80c8f6" stroke-width="1.1"/>
<polyline points="549.6,363.8 535.4,385.5" fill="none" stroke="#80c8f6" stroke-width="1.1"/>
<polyline points="534.0,316.4 518.3,340.4" fill="none" stroke="#80c8f6" stroke-width="1.1"/>
<polyline points="381.8,327.7 406.1,343.7" fill="none" stroke="#80c8f6" stroke-width="1.1"/>
<polyline points="373.6,340.3 397.8,356.2" fill="none" stroke="#80c8f6" stroke-width="1.1"/>
<polyline points="434.4,327.9 418.1,352.7" fill="none" stroke="#80c8f6" stroke-width="1.1"/>
<polyline points="471.0,352.2 454.8,376.8" fill="none" stroke="#80c8f6" stroke-width="1.1"/>
<polyline points="483.0,360.1 466.8,384.8" fill="none" stroke="#80c8f6" stroke-width="1.1"/>
<polyline points="495.1,368.0 478.9,392.7" fill="none" stroke="#80c8f6" stroke-width="1.1"/>
<polyline points="507.2,376.0 491.0,400.6" fill="none" stroke="#80c8f6" stroke-width="1.1"/>
<polyline points="519.2,383.9 503.0,408.5" fill="none" stroke="#80c8f6" stroke-width="1.1"/>
<polyline points="531.3,391.8 515.1,416.5" fill="none" stroke="#80c8f6" stroke-width="1.1"/>
<polyline points="417.6,352.4 401.7,376.7" fill="none" stroke="#80c8f6" stroke-width="1.1"/>
<polyline points="429.7,360.4 413.8,384.6" fill="none" stroke="#80c8f6" stroke-width="1.1"/>
<polyline points="441.8,368.3 425.8,392.5" fill="none" stroke="#80c8f6" stroke-width="1.1"/>
<polyline points="453.8,376.2 437.9,400.5" fill="none" stroke="#80c8f6" stroke-width="1.1"/>
<polyline points="465.9,384.2 450.0,408.4" fill="none" stroke="#80c8f6" stroke-width="1.1"/>
<polyline points="478.0,392.1 462.1,416.3" fill="none" stroke="#80c8f6" stroke-width="1.1"/>
<polyline points="490.1,400.0 474.2,424.3" fill="none" stroke="#80c8f6" stroke-width="1.1"/>
<polyline points="502.2,408.0 486.2,432.2" fill="none" stroke="#80c8f6" stroke-width="1.1"/>
<polyline points="514.2,415.9 498.3,440.1" fill="none" stroke="#80c8f6" stroke-width="1.1"/>
<polyline points="373.6,366.0 356.8,391.5" fill="none" stroke="#80c8f6" stroke-width="1.1"/>
<polyline points="385.8,374.0 369.0,399.5" fill="none" stroke="#80c8f6" stroke-width="1.1"/>
<polyline points="398.0,382.0 381.2,407.5" fill="none" stroke="#80c8f6" stroke-width="1.1"/>
<polyline points="410.1,390.0 393.4,415.5" fill="none" stroke="#80c8f6" stroke-width="1.1"/>
<polyline points="422.3,398.0 405.6,423.5" fill="none" stroke="#80c8f6" stroke-width="1.1"/>
<polyline points="434.5,406.0 417.8,431.5" fill="none" stroke="#80c8f6" stroke-width="1.1"/>
<polyline points="446.7,414.0 430.0,439.5" fill="none" stroke="#80c8f6" stroke-width="1.1"/>
<polyline points="458.9,422.0 442.2,447.5" fill="none" stroke="#80c8f6" stroke-width="1.1"/>
<polyline points="471.1,430.0 454.3,455.5" fill="none" stroke="#80c8f6" stroke-width="1.1"/>
<polyline points="483.3,438.0 466.5,463.5" fill="none" stroke="#80c8f6" stroke-width="1.1"/>
<polyline points="495.5,446.0 478.7,471.5" fill="none" stroke="#80c8f6" stroke-width="1.1"/>
<polyline points="519.4,468.0 504.4,490.8" fill="none" stroke="#80c8f6" stroke-width="1.1"/>
<polyline points="531.4,475.9 516.4,498.7" fill="none" stroke="#80c8f6" stroke-width="1.1"/>
<polyline points="543.5,483.8 528.5,506.6" fill="none" stroke="#80c8f6" stroke-width="1.1"/>
<polyline points="555.5,491.7 540.5,514.5" fill="none" stroke="#80c8f6" stroke-width="1.1"/>
<polyline points="567.6,499.6 552.6,522.4" fill="none" stroke="#80c8f6" stroke-width="1.1"/>
<polyline points="579.6,507.5 564.6,530.3" fill="none" stroke="#80c8f6" stroke-width="1.1"/>
<polyline points="591.7,515.4 576.7,538.3" fill="none" stroke="#80c8f6" stroke-width="1.1"/>
<polyline points="603.7,523.4 588.7,546.2" fill="none" stroke="#80c8f6" stroke-width="1.1"/>
<polyline points="615.8,531.3 600.8,554.1" fill="none" stroke="#80c8f6" stroke-width="1.1"/>
<polyline points="627.8,539.2 612.8,562.0" fill="none" stroke="#80c8f6" stroke-width="1.1"/>
<polyline points="639.9,547.1 624.9,569.9" fill="none" stroke="#80c8f6" stroke-width="1.1"/>
<polyline points="537.8,417.3 561.2,432.7" fill="none" stroke="#80c8f6" stroke-width="1.1"/>
<polyline points="581.1,428.7 565.5,452.5" fill="none" stroke="#80c8f6" stroke-width="1.1"/>
<polyline points="593.2,436.7 577.6,460.5" fill="none" stroke="#80c8f6" stroke-width="1.1"/>
<polyline points="605.4,444.6 589.7,468.5" fill="none" stroke="#80c8f6" stroke-width="1.1"/>
<polyline points="617.5,452.6 601.8,476.4" fill="none" stroke="#80c8f6" stroke-width="1.1"/>
<polyline points="629.6,460.6 613.9,484.4" fill="none" stroke="#80c8f6" stroke-width="1.1"/>
<polyline points="564.7,452.0 549.3,475.4" fill="none" stroke="#80c8f6" stroke-width="1.1"/>
<polyline points="576.9,460.0 561.5,483.4" fill="none" stroke="#80c8f6" stroke-width="1.1"/>
<polyline points="589.1,468.0 573.7,491.4" fill="none" stroke="#80c8f6" stroke-width="1.1"/>
<polyline points="601.2,476.0 585.9,499.4" fill="none" stroke="#80c8f6" stroke-width="1.1"/>
<polyline points="613.4,484.0 598.0,507.4" fill="none" stroke="#80c8f6" stroke-width="1.1"/>
<polyline points="625.6,492.0 610.2,515.4" fill="none" stroke="#80c8f6" stroke-width="1.1"/>
<polyline points="671.0,150.4 660.2,166.9" fill="none" stroke="#80c8f6" stroke-width="1.1"/>
<polyline points="687.6,161.2 676.7,177.8" fill="none" stroke="#80c8f6" stroke-width="1.1"/>
<polyline points="704.1,172.1 693.3,188.7" fill="none" stroke="#80c8f6" stroke-width="1.1"/>
<polyline points="675.3,181.0 664.4,197.5" fill="none" stroke="#80c8f6" stroke-width="1.1"/>
<polyline points="691.8,191.9 681.0,208.4" fill="none" stroke="#80c8f6" stroke-width="1.1"/>
<polyline points="708.4,202.7 697.5,219.3" fill="none" stroke="#80c8f6" stroke-width="1.1"/>
<polyline points="657.8,193.5 636.1,226.6" fill="none" stroke="#80c8f6" stroke-width="1.1"/>
<polyline points="630.4,199.2 663.5,220.9" fill="none" stroke="#80c8f6" stroke-width="1.1"/>
<polyline points="643.4,236.0 632.6,252.5" fill="none" stroke="#80c8f6" stroke-width="1.1"/>
<polyline points="660.0,246.9 649.1,263.4" fill="none" stroke="#80c8f6" stroke-width="1.1"/>
<polyline points="721.5,155.9 710.7,172.4" fill="none" stroke="#80c8f6" stroke-width="1.1"/>
<polyline points="741.0,221.7 757.6,232.5" fill="none" stroke="#80c8f6" stroke-width="1.1"/>
<polyline points="598.4,180.6 587.6,197.1" fill="none" stroke="#80c8f6" stroke-width="1.1"/>
<polyline points="592.9,150.9 582.1,167.4" fill="none" stroke="#80c8f6" stroke-width="1.1"/>
<polyline points="665.3,275.4 654.4,291.9" fill="none" stroke="#80c8f6" stroke-width="1.1"/>
<polyline points="681.8,286.2 671.0,302.8" fill="none" stroke="#80c8f6" stroke-width="1.1"/>
<polyline points="725.3,291.6 714.4,308.2" fill="none" stroke="#80c8f6" stroke-width="1.1"/>
<polyline points="814.0,195.4 803.2,211.9" fill="none" stroke="#80c8f6" stroke-width="1.1"/>
<polyline points="830.6,206.2 819.7,222.8" fill="none" stroke="#80c8f6" stroke-width="1.1"/>
<polyline points="847.1,217.1 836.3,233.7" fill="none" stroke="#80c8f6" stroke-width="1.1"/>
<polyline points="715.4,361.0 731.9,371.9" fill="none" stroke="#80c8f6" stroke-width="1.1"/>
<polyline points="697.8,377.9 686.9,394.4" fill="none" stroke="#80c8f6" stroke-width="1.1"/>
<polyline points="654.0,317.9 643.2,334.4" fill="none" stroke="#80c8f6" stroke-width="1.1"/>
<polyline points="670.6,328.7 659.7,345.3" fill="none" stroke="#80c8f6" stroke-width="1.1"/>
<polyline points="679.0,312.9 668.2,329.4" fill="none" stroke="#80c8f6" stroke-width="1.1"/>
<polyline points="695.6,323.7 684.7,340.3" fill="none" stroke="#80c8f6" stroke-width="1.1"/>
<polyline points="601.5,311.6 590.7,328.2" fill="none" stroke="#80c8f6" stroke-width="1.1"/>
<polyline points="622.8,350.4 611.9,366.9" fill="none" stroke="#80c8f6" stroke-width="1.1"/>
<polyline points="580.9,349.5 565.5,372.9" fill="none" stroke="#80c8f6" stroke-width="1.1"/>
<polyline points="880.2,136.0 858.9,168.4" fill="none" stroke="#80c8f6" stroke-width="1.1"/>
<polyline points="850.7,139.8 888.4,164.5" fill="none" stroke="#80c8f6" stroke-width="1.1"/>
<polyline points="886.5,191.6 875.7,208.2" fill="none" stroke="#80c8f6" stroke-width="1.1"/>
<polyline points="787.5,521.2 721.2,620.0" fill="none" stroke="#80c8f6" stroke-width="1.1"/>
<polyline points="832.5,551.2 787.5,620.0" fill="none" stroke="#80c8f6" stroke-width="1.1"/>
<polyline points="877.5,580.0 851.2,620.0" fill="none" stroke="#80c8f6" stroke-width="1.1"/>
<polyline points="700.0,500.0 721.2,513.8" fill="none" stroke="#80c8f6" stroke-width="1.1"/>
<polyline points="690.0,513.8 712.5,527.5" fill="none" stroke="#80c8f6" stroke-width="1.1"/>
<polyline points="681.2,527.5 702.5,540.0" fill="none" stroke="#80c8f6" stroke-width="1.1"/>
<polyline points="675.0,540.0 693.8,555.0" fill="none" stroke="#80c8f6" stroke-width="1.1"/>
<polyline points="1145.7,522.3 1159.9,531.7" fill="none" stroke="#80c8f6" stroke-width="1.1"/>
<polyline points="1173.9,544.0 1164.6,558.2" fill="none" stroke="#80c8f6" stroke-width="1.1"/>
<polyline points="1095.8,647.1 1086.4,661.4" fill="none" stroke="#80c8f6" stroke-width="1.1"/>
<polyline points="1130.0,641.1 1144.3,650.4" fill="none" stroke="#80c8f6" stroke-width="1.1"/>
<polyline points="955.6,878.1 1058.7,705.6" fill="none" stroke="#80c8f6" stroke-width="1.1"/>
<polyline points="920.0,855.6 1025.0,681.2" fill="none" stroke="#80c8f6" stroke-width="1.1"/>
<polyline points="884.4,835.0 991.2,658.7" fill="none" stroke="#80c8f6" stroke-width="1.1"/>
<polyline points="848.7,812.5 957.5,636.2" fill="none" stroke="#80c8f6" stroke-width="1.1"/>
<polyline points="1098.1,646.1 1088.3,661.2" fill="none" stroke="#80c8f6" stroke-width="1.1"/>
<polyline points="1130.0,641.1 1144.2,650.4" fill="none" stroke="#80c8f6" stroke-width="1.1"/>
<polyline points="1117.4,685.2 1130.8,694.0" fill="none" stroke="#80c8f6" stroke-width="1.1"/>
<polyline points="649.3,509.8 673.5,525.5" fill="none" stroke="#80c8f6" stroke-width="1.1"/>
<polyline points="641.9,522.0 665.7,538.0" fill="none" stroke="#80c8f6" stroke-width="1.1"/>
<polyline points="650.0,572.3 671.9,586.4" fill="none" stroke="#80c8f6" stroke-width="1.1"/>
<polyline points="287.2,863.1 335.7,855.2" fill="none" stroke="#80c8f6" stroke-width="1.1"/>
<polyline points="291.9,878.7 340.4,867.8" fill="none" stroke="#80c8f6" stroke-width="1.1"/>
<polyline points="295.1,891.2 341.9,881.8" fill="none" stroke="#80c8f6" stroke-width="1.1"/>
<polyline points="277.9,920.9 293.5,919.3" fill="none" stroke="#80c8f6" stroke-width="1.1"/>
<polyline points="277.9,942.8 298.2,938.1" fill="none" stroke="#80c8f6" stroke-width="1.1"/>
<polyline points="277.9,961.5 302.9,956.8" fill="none" stroke="#80c8f6" stroke-width="1.1"/>
<polyline points="277.9,977.1 306.0,974.0" fill="none" stroke="#80c8f6" stroke-width="1.1"/>
<polyline points="303.7,929.5 350.5,914.6" fill="none" stroke="#80c8f6" stroke-width="1.1"/>
<polyline points="306.0,941.2 352.9,927.1" fill="none" stroke="#80c8f6" stroke-width="1.1"/>
<polyline points="308.3,952.9 355.2,939.6" fill="none" stroke="#80c8f6" stroke-width="1.1"/>
<polyline points="356.0,939.6 406.0,925.6" fill="none" stroke="#80c8f6" stroke-width="1.1"/>
<polyline points="370.1,936.5 376.3,961.5" fill="none" stroke="#80c8f6" stroke-width="1.1"/>
<polyline points="363.8,966.2 413.8,952.1" fill="none" stroke="#80c8f6" stroke-width="1.1"/>
<polyline points="449.8,861.5 427.9,892.8" fill="none" stroke="#80c8f6" stroke-width="1.1"/>
<polyline points="459.1,961.5 466.9,986.5" fill="none" stroke="#80c8f6" stroke-width="1.1"/>
<polyline points="602.9,963.1 588.8,986.5" fill="none" stroke="#80c8f6" stroke-width="1.1"/>
<polyline points="613.8,970.9 604.4,986.5" fill="none" stroke="#80c8f6" stroke-width="1.1"/>
<polyline points="581.0,349.6 565.3,373.5" fill="none" stroke="#80c8f6" stroke-width="1.1"/>
<polyline points="577.0,383.6 562.7,405.4" fill="none" stroke="#80c8f6" stroke-width="1.1"/>
<polyline points="622.5,350.1 611.6,366.6" fill="none" stroke="#80c8f6" stroke-width="1.1"/>
<polyline points="697.5,377.4 686.6,394.0" fill="none" stroke="#80c8f6" stroke-width="1.1"/>
<polyline points="624.9,416.6 610.1,439.2" fill="none" stroke="#80c8f6" stroke-width="1.1"/>
<polyline points="636.9,424.5 622.0,447.0" fill="none" stroke="#80c8f6" stroke-width="1.1"/>
<polyline points="648.8,432.3 634.0,454.9" fill="none" stroke="#80c8f6" stroke-width="1.1"/>
<polyline points="680.9,421.3 666.6,443.1" fill="none" stroke="#80c8f6" stroke-width="1.1"/>
<polyline points="684.9,458.4 670.6,480.1" fill="none" stroke="#80c8f6" stroke-width="1.1"/>
<polyline points="270.0,188.0 370.4,267.5 392.0,238.0 480.0,144.0" fill="none" stroke="#99cc00" stroke-width="1.9"/>
<polyline points="370.4,267.5 289.8,388.0 279.0,405.0" fill="none" stroke="#99cc00" stroke-width="1.9"/>
<polyline points="960.0,145.0 939.5,173.2 972.5,198.2 1025.0,232.0 1085.0,274.5 1140.0,314.5 1170.0,333.2" fill="none" stroke="#99cc00" stroke-width="1.9"/>
<polyline points="1175.0,990.0 1167.5,964.0 1131.9,885.6 1182.5,818.0 1216.0,788.0 1280.0,700.0" fill="none" stroke="#99cc00" stroke-width="1.9"/>
<polyline points="1170.0,333.2 1186.2,343.1 1280.0,409.7" fill="none" stroke="#99cc00" stroke-width="1.9"/>
<polyline points="281.0,744.4 487.2,880.0 640.0,984.0" fill="none" stroke="#99cc00" stroke-width="1.9"/>
<polyline points="281.0,847.4 312.2,986.5" fill="none" stroke="#99cc00" stroke-width="1.9"/>
<text transform="translate(-70.6 151.5) scale(1.44 1)" font-family="Liberation Sans" font-size="13" letter-spacing="0.6" fill="#fff" fill-opacity="0.065">2014 © ПКК. Центр ДЗК</text>
<text transform="translate(185.4 151.5) scale(1.44 1)" font-family="Liberation Sans" font-size="13" letter-spacing="0.6" fill="#fff" fill-opacity="0.065">2014 © ПКК. Центр ДЗК</text>
<text transform="translate(441.4 151.5) scale(1.44 1)" font-family="Liberation Sans" font-size="13" letter-spacing="0.6" fill="#fff" fill-opacity="0.065">2014 © ПКК. Центр ДЗК</text>
<text transform="translate(697.4 151.5) scale(1.44 1)" font-family="Liberation Sans" font-size="13" letter-spacing="0.6" fill="#fff" fill-opacity="0.065">2014 © ПКК. Центр ДЗК</text>
<text transform="translate(953.4 151.5) scale(1.44 1)" font-family="Liberation Sans" font-size="13" letter-spacing="0.6" fill="#fff" fill-opacity="0.065">2014 © ПКК. Центр ДЗК</text>
<text transform="translate(1209.4 151.5) scale(1.44 1)" font-family="Liberation Sans" font-size="13" letter-spacing="0.6" fill="#fff" fill-opacity="0.065">2014 © ПКК. Центр ДЗК</text>
<text transform="translate(-70.6 407.5) scale(1.44 1)" font-family="Liberation Sans" font-size="13" letter-spacing="0.6" fill="#fff" fill-opacity="0.065">2014 © ПКК. Центр ДЗК</text>
<text transform="translate(185.4 407.5) scale(1.44 1)" font-family="Liberation Sans" font-size="13" letter-spacing="0.6" fill="#fff" fill-opacity="0.065">2014 © ПКК. Центр ДЗК</text>
<text transform="translate(441.4 407.5) scale(1.44 1)" font-family="Liberation Sans" font-size="13" letter-spacing="0.6" fill="#fff" fill-opacity="0.065">2014 © ПКК. Центр ДЗК</text>
<text transform="translate(697.4 407.5) scale(1.44 1)" font-family="Liberation Sans" font-size="13" letter-spacing="0.6" fill="#fff" fill-opacity="0.065">2014 © ПКК. Центр ДЗК</text>
<text transform="translate(953.4 407.5) scale(1.44 1)" font-family="Liberation Sans" font-size="13" letter-spacing="0.6" fill="#fff" fill-opacity="0.065">2014 © ПКК. Центр ДЗК</text>
<text transform="translate(1209.4 407.5) scale(1.44 1)" font-family="Liberation Sans" font-size="13" letter-spacing="0.6" fill="#fff" fill-opacity="0.065">2014 © ПКК. Центр ДЗК</text>
<text transform="translate(-70.6 663.5) scale(1.44 1)" font-family="Liberation Sans" font-size="13" letter-spacing="0.6" fill="#fff" fill-opacity="0.065">2014 © ПКК. Центр ДЗК</text>
<text transform="translate(185.4 663.5) scale(1.44 1)" font-family="Liberation Sans" font-size="13" letter-spacing="0.6" fill="#fff" fill-opacity="0.065">2014 © ПКК. Центр ДЗК</text>
<text transform="translate(441.4 663.5) scale(1.44 1)" font-family="Liberation Sans" font-size="13" letter-spacing="0.6" fill="#fff" fill-opacity="0.065">2014 © ПКК. Центр ДЗК</text>
<text transform="translate(697.4 663.5) scale(1.44 1)" font-family="Liberation Sans" font-size="13" letter-spacing="0.6" fill="#fff" fill-opacity="0.065">2014 © ПКК. Центр ДЗК</text>
<text transform="translate(953.4 663.5) scale(1.44 1)" font-family="Liberation Sans" font-size="13" letter-spacing="0.6" fill="#fff" fill-opacity="0.065">2014 © ПКК. Центр ДЗК</text>
<text transform="translate(1209.4 663.5) scale(1.44 1)" font-family="Liberation Sans" font-size="13" letter-spacing="0.6" fill="#fff" fill-opacity="0.065">2014 © ПКК. Центр ДЗК</text>
<text transform="translate(-70.6 919.5) scale(1.44 1)" font-family="Liberation Sans" font-size="13" letter-spacing="0.6" fill="#fff" fill-opacity="0.065">2014 © ПКК. Центр ДЗК</text>
<text transform="translate(185.4 919.5) scale(1.44 1)" font-family="Liberation Sans" font-size="13" letter-spacing="0.6" fill="#fff" fill-opacity="0.065">2014 © ПКК. Центр ДЗК</text>
<text transform="translate(441.4 919.5) scale(1.44 1)" font-family="Liberation Sans" font-size="13" letter-spacing="0.6" fill="#fff" fill-opacity="0.065">2014 © ПКК. Центр ДЗК</text>
<text transform="translate(697.4 919.5) scale(1.44 1)" font-family="Liberation Sans" font-size="13" letter-spacing="0.6" fill="#fff" fill-opacity="0.065">2014 © ПКК. Центр ДЗК</text>
<text transform="translate(953.4 919.5) scale(1.44 1)" font-family="Liberation Sans" font-size="13" letter-spacing="0.6" fill="#fff" fill-opacity="0.065">2014 © ПКК. Центр ДЗК</text>
<text transform="translate(1209.4 919.5) scale(1.44 1)" font-family="Liberation Sans" font-size="13" letter-spacing="0.6" fill="#fff" fill-opacity="0.065">2014 © ПКК. Центр ДЗК</text>
</svg><!--/MAP--></div>

<div class="a" style="left:1278px;top:147px;width:2px;height:837px;background:#c8c8c8"></div>
<div class="grp" style="left:290px;width:73px"></div>
<div class="btn" style="left:293px;top:158px;width:33px;height:28px"></div>
<div class="btn" style="left:327px;top:158px;width:33px;height:28px"></div>
<div class="grp" style="left:365px;width:73px"></div>
<div class="btn" style="left:368px;top:158px;width:33px;height:28px"></div>
<div class="btn" style="left:402px;top:158px;width:33px;height:28px"></div>
<svg class="a" style="left:293px;top:158px" width="142" height="28" viewBox="0 0 142 28">
 <path d="M11 6v17" stroke="#fff" stroke-width="2"/>
 <text x="18" y="23" font-family="Liberation Sans" font-size="8" font-weight="bold" fill="#fff">M</text>
 <path d="M42 11h18M46 7v17" stroke="#fff" stroke-width="2"/>
 <text x="52" y="23" font-family="Liberation Sans" font-size="8" font-weight="bold" fill="#fff">M²</text>
 <path d="M88.5 8.5h6l2 2v3h-8z" fill="none" stroke="#fff" stroke-width="1.3"/><rect x="84" y="13" width="16" height="6.5" rx="1.8" fill="#fff"/><rect x="88" y="16" width="8.5" height="6" fill="#fff" stroke="#6b88b0" stroke-width="0.8"/><path d="M89.5 18.3h5.5M89.5 20.3h5.5" stroke="#6b88b0" stroke-width="0.8"/>
 <path d="M117 6l0 12 3-3 2 4 2-1-2-4h4z" fill="#fff"/>
 <text x="128" y="24" font-family="Liberation Sans" font-size="11" font-weight="bold" fill="#fff">?</text>
</svg>
<div class="a" style="left:288px;top:197px;width:28px;height:51px;border-radius:5px;border:3px solid rgba(200,200,200,0.6)"></div>
<div class="a" style="left:291px;top:200px;width:22px;height:45px;border-radius:4px;background:rgba(78,116,176,0.8)"></div>
<div class="a" style="left:291px;top:222px;width:22px;height:1px;background:rgba(170,170,170,0.8)"></div>
<div class="a" style="left:296px;top:209.5px;width:12px;height:2px;background:#fff"></div>
<div class="a" style="left:301px;top:205px;width:2px;height:11px;background:#fff"></div>
<div class="a" style="left:298px;top:233px;width:8px;height:2px;background:#fff"></div>
<div class="a" style="left:1195px;top:155px;width:75px;height:37px;border-radius:6px;border:3px solid rgba(215,215,215,0.85)"></div>
<div class="a" style="left:1198px;top:158px;width:69px;height:31px;border-radius:4px;background:rgba(112,150,196,0.82)"></div>
<svg class="a" style="left:1205px;top:167px" width="15" height="15" viewBox="0 0 15 15"><g fill="#fff"><circle cx="7.5" cy="7.5" r="4.6"/><rect x="6.2" y="0.5" width="2.6" height="14"/><rect x="0.5" y="6.2" width="14" height="2.6"/><rect x="6.2" y="0.5" width="2.6" height="14" transform="rotate(45 7.5 7.5)"/><rect x="6.2" y="0.5" width="2.6" height="14" transform="rotate(-45 7.5 7.5)"/></g><circle cx="7.5" cy="7.5" r="1.8" fill="#6b8ab2"/></svg>
<div class="a" style="left:1225px;top:166px;font-size:13px;color:#fff;line-height:14px">Шари</div>
<div class="a" style="left:1163px;top:959px;width:117px;height:25px;background:#fff"></div>
<div class="a" style="left:1168px;top:965px;font-size:11.8px;color:#000;line-height:14px;white-space:nowrap">Масштаб = 1 : 8531</div>
<svg class="a" style="left:630px;top:568px" width="362" height="212" viewBox="630 568 362 212">
 <defs><filter id="sh" x="-5%" y="-5%" width="110%" height="115%"><feGaussianBlur stdDeviation="1.5"/></filter></defs>
 <path d="M636 621H984a5 5 0 0 1 5 5V771a5 5 0 0 1-5 5H636a5 5 0 0 1-5-5V626a5 5 0 0 1 5-5z" fill="#000" opacity="0.35" filter="url(#sh)" transform="translate(1,1.5)"/>
 <path d="M641 573L653 620H636a5 5 0 0 0-5 5V771a5 5 0 0 0 5 5H984a5 5 0 0 0 5-5V625a5 5 0 0 0-5-5H684z" fill="#fff"/>
 <rect x="635.5" y="625" width="349.5" height="147" fill="#e3e3e3"/>
</svg>
<div class="a" style="left:650px;top:645px;font-size:14px;font-weight:bold;color:#000;line-height:16px">Ділянка</div>
<svg class="a" style="left:959px;top:639px" width="12" height="12" viewBox="0 0 12 12"><path d="M1.5 1.5l9 9M10.5 1.5l-9 9" stroke="#8a8a8a" stroke-width="2.2"/></svg>
<div class="a" style="left:650px;top:677px;font-size:11px;font-weight:bold;color:#7a7a7a;line-height:14.5px;white-space:nowrap">Кадастр.номер:<br>Цільове призначення:<br>Площа:</div>
<div class="a" style="left:795px;top:676px;font-size:12px;color:#000;line-height:15px;white-space:nowrap"><b>3224987200:02:05:109</b><br>1.2<br>0.0987 га.</div>
<div id="taskbar" class="a">
 <div class="a" style="left:0;top:0;width:1280px;height:1px;background:#b8bcbc"></div>
 <div class="a" style="left:0;top:1px;width:1280px;height:1px;background:#3d4546"></div>
 <div class="a" style="left:300px;top:4px;width:740px;height:32px;background:linear-gradient(90deg,rgba(0,0,0,0),rgba(60,70,60,.25) 20%,rgba(20,20,20,.3) 32%,rgba(80,80,70,.2) 50%,rgba(20,25,20,.25) 70%,rgba(0,0,0,0));filter:blur(4px)"></div>
 <svg class="a" style="left:6px;top:0" width="44" height="40" viewBox="0 0 44 40">
  <defs><radialGradient id="orb" cx="50%" cy="35%" r="60%"><stop offset="0" stop-color="#7fc4ee"/><stop offset="0.55" stop-color="#2a6cb0"/><stop offset="1" stop-color="#0c2a55"/></radialGradient></defs>
  <circle cx="21" cy="19" r="18.5" fill="url(#orb)" stroke="#1a2a3a" stroke-width="1"/>
  <path d="M11 12.5q4-2 9 0v6.5q-5-2-9 0z" fill="#f25022"/><path d="M21.5 12.8q5 2 9.5-.3v6.5q-4.5 2.3-9.5.3z" fill="#7fba00"/>
  <path d="M11 20.5q4-2 9 0v6.5q-5-2-9 0z" fill="#00a4ef"/><path d="M21.5 20.8q5 2 9.5-.3v6.5q-4.5 2.3-9.5.3z" fill="#ffb900"/>
 </svg>
 <div class="a" style="left:60px;top:1px;width:58px;height:38px;border-radius:3px;border:1px solid #f8e0a0;background:linear-gradient(#f4dc8a,#e9b24a 55%,#e08a28)"></div>
 <svg class="a" style="left:72px;top:8px" width="34" height="28" viewBox="0 0 34 28"><path d="M2 4h11l2 3h17v19H2z" fill="#f3dc98" stroke="#c8a050" stroke-width="1"/><rect x="6" y="3" width="5" height="3" fill="#3bb04a"/><rect x="16" y="6" width="5" height="3" fill="#d83030"/><rect x="22" y="8" width="5" height="3" fill="#2a7ad0"/><path d="M8 26v-9h18v9h-5v-5h-8v5z" fill="#9fd4f4" stroke="#5aa0d0" stroke-width="1"/></svg>
 <svg class="a" style="left:136px;top:4px" width="32" height="32" viewBox="0 0 32 32"><defs><radialGradient id="oc" cx="45%" cy="30%" r="65%"><stop offset="0" stop-color="#fffbe0"/><stop offset="0.55" stop-color="#f6d860"/><stop offset="1" stop-color="#d8a418"/></radialGradient></defs><circle cx="15" cy="15.5" r="14" fill="url(#oc)"/><path d="M3 13l3-1.5h2.5V20H6v-6H3z" fill="#e01818"/><path d="M22 11.5h-9q-3 0-3 3.5t3 4h14v2H12.5q-5 0-5-6t5-5.5H22z" fill="#e01818"/><path d="M21 13.2h-8q-1.5 0-1.5 1.8t1.5 2h13" fill="none" stroke="#fff3c0" stroke-width="0.9"/></svg>
 <div class="a" style="left:184px;top:1px;width:58px;height:38px;border-radius:3px;border:1px solid #d8d8d8;background:linear-gradient(#dcdcdc,#b4b4b4 55%,#9a9a9a)"></div>
 <svg class="a" style="left:197px;top:3px" width="32" height="32" viewBox="0 0 32 32"><defs><radialGradient id="ffb" cx="55%" cy="40%" r="55%"><stop offset="0" stop-color="#3fa0e0"/><stop offset="0.7" stop-color="#1b4fa0"/><stop offset="1" stop-color="#12306a"/></radialGradient><linearGradient id="ffo" x1="0" y1="0" x2="0" y2="1"><stop offset="0" stop-color="#f8b030"/><stop offset="0.6" stop-color="#e8601c"/><stop offset="1" stop-color="#d83a18"/></linearGradient></defs><circle cx="17" cy="14.5" r="11" fill="url(#ffb)"/><path d="M4 12q0-5 4-8-1 3 1 5 3-3 8-3-4 2-5 5 1 3 4 3 4 1 3 4-1 5-7 5 8 2 13-3 2-3 2-6 3 4 1 10-4 7-12 7Q8 29 5 24 3 19 4 12z" fill="url(#ffo)"/><path d="M25 7q4 4 3.5 9" fill="none" stroke="#f6d040" stroke-width="2"/></svg>
 <svg class="a" style="left:260px;top:4px" width="32" height="32" viewBox="0 0 32 32"><circle cx="15" cy="15" r="14" fill="#db4437"/><path d="M15 15L27.1 8A14 14 0 0 1 15 29z" fill="#f4c20d"/><path d="M15 15L15 29A14 14 0 0 1 2.9 8z" fill="#0f9d58"/><circle cx="15" cy="15" r="6.5" fill="#fff"/><circle cx="15" cy="15" r="5" fill="#4285f4"/></svg>
 <div class="a" style="left:1066px;top:11px;font-size:11.5px;color:#f0f0f0;line-height:14px">EN</div>
 <div class="a" style="left:1098px;top:18px;border-left:4px solid transparent;border-right:4px solid transparent;border-bottom:5px solid #e8e8e8"></div>
 <svg class="a" style="left:1117px;top:13px" width="18" height="16" viewBox="0 0 18 16"><path d="M2 1v14" stroke="#eee" stroke-width="1.5"/><path d="M3 2h7l1 2h5l-2 3 2 3h-5l-1-2H3z" fill="#eee"/></svg>
 <svg class="a" style="left:1142px;top:13px" width="17" height="16" viewBox="0 0 17 16"><rect x="5" y="4" width="10" height="8" fill="none" stroke="#eee" stroke-width="1.5"/><path d="M4 0v6M1 3h5M10 12v3M6 15h8" stroke="#eee" stroke-width="1.5"/></svg>
 <svg class="a" style="left:1165px;top:14px" width="16" height="14" viewBox="0 0 16 14"><path d="M1 4h3l4-3v12l-4-3H1z" fill="#eee"/><path d="M10 4q2 3 0 6M12.5 2q3.5 5 0 10" fill="none" stroke="#eee" stroke-width="1.3"/></svg>
 <div class="a" style="left:1214px;top:5px;font-size:11.2px;color:#fff;line-height:14px">12:24</div>
 <div class="a" style="left:1200px;top:23px;font-size:11.2px;color:#fff;line-height:14px">27.06.2014</div>
 <div class="a" style="left:1266px;top:1px;width:14px;height:39px;border:1px solid #6a7472;border-right:none;background:linear-gradient(90deg,rgba(255,255,255,.08),rgba(255,255,255,.02))"></div>
</div>
</body></html>
